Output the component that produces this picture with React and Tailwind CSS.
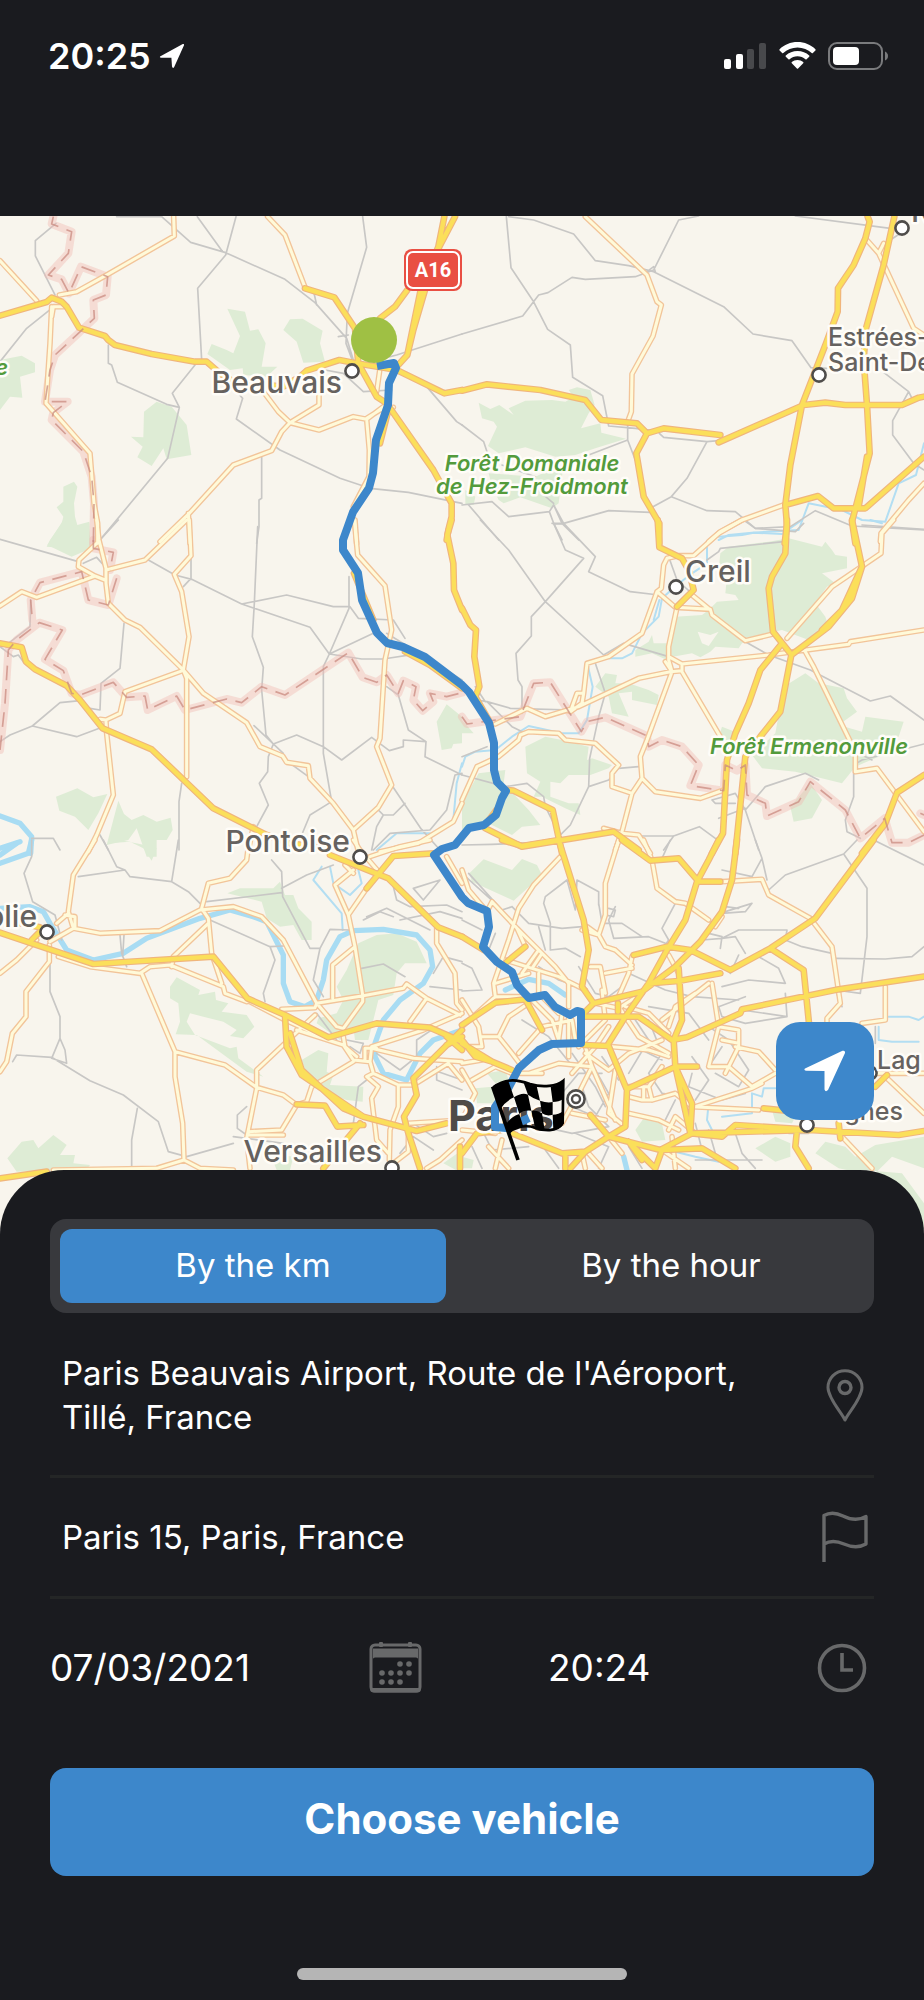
import { useState } from "react";

// The map is surveyed in six sheets, each drawn at three units per map pixel.
const SHEETS = [
  {
    at: "translate(0 210) scale(0.33333)",
    forest:
      "M682 296L735 305L750 362L775 358L797 400L785 470L832 470L800 500L730 495L728 475L690 480L655 455L622 432L635 402L680 420L700 430L720 378Z M870 328L908 326L968 362L960 400L975 455L910 458L890 395L850 360Z M432 605L470 575L515 590L560 645L574 735L500 748L490 715L455 768L412 742L428 710L393 680L430 682Z M150 990L185 940L190 920L170 892L190 875L190 830L222 815L232 830L222 880L225 920L232 945L268 935L272 1020L140 1010Z M0 450L65 437L105 460L105 487L60 500L67 563L30 560L0 600Z",
    minor:
      "M168 40L106 92L106 138L165 255 M0 455L80 355L155 295 M485 20L572 97L677 128L855 208L945 278L1040 385L1060 450 M592 20L668 125 M708 20L677 135L593 235L605 450 M1088 20L1100 112L1042 310L1038 400L1055 445 M940 240L950 285 M1015 380L1045 375 M325 405L325 460L335 465L352 517L500 583L538 592L503 745L300 990 M585 465L517 550L538 592 M1150 445L1190 435L1386 372 M710 545L728 565L709 627L840 720L1020 805L1110 835L1225 847L1386 880 M785 740L785 865L777 870L777 950L770 1000 M1280 530L1370 635L1386 645 M975 480L1030 490L1090 545L1175 540 M350 20L485 20",
    water: "",
    thin: "",
    secondary:
      "M0 152L110 272 M521 20L523 78L320 195L230 245L178 255 M155 290L150 400L138 580L270 730L282 880L293 940L293 1000 M190 290L160 290L155 320 M803 20L855 75L915 232 M790 545L835 605L870 638L957 660L1060 620L1100 628L1150 590 M957 550L957 585L870 638L845 665L815 722L700 765L568 910L480 995 M565 910L570 1000 M1100 628L1108 720L1107 800L1060 890 M1065 930L1070 1000 M1140 475L1130 545 M1100 625L1140 600L1180 592",
    primary:
      "M0 317L140 276L155 263L185 275L200 290L237 353L315 378L325 390L345 405L455 432L585 455L620 455L660 490L700 515L850 530L900 500L920 482L1018 450L1060 458L1160 475L1190 480L1333 550L1386 540 M915 235L1003 262L1065 355L1075 460L1130 560L1160 580L1300 780L1355 880L1355 920L1345 960L1340 990 M1333 20L1315 110L1262 240L1222 435L1190 470 M1365 20L1318 110L1275 240L1240 360L1222 435 M1140 325L1185 290L1222 240 M1165 600L1140 700",
    border:
      "M160 20L155 42L215 65L205 130L145 195L185 208L207 250L243 170L323 200L318 255L280 270L283 325L235 370L165 435L150 480L135 575L203 575L160 608L155 630L250 725L275 800L282 880L280 1000",
  },
  {
    at: "translate(462 210) scale(0.33333)",
    forest:
      "M50 578L85 597L112 585L155 615L140 595L190 572L270 570L310 575L335 562L320 540L345 532L385 540L398 585L380 610L357 655L415 640L418 668L492 686L400 715L340 735L280 740L190 712L110 730L78 708L105 650L95 635L60 625Z M80 790L220 800L305 760L290 880L270 895L175 862L125 880L110 870L90 830Z M10 840L40 860L35 885L10 885Z",
    minor:
      "M133 20L147 173L213 272L257 358L325 405L332 502L422 557L440 648L520 655L600 665 M0 372L182 318L230 255L258 248L330 202L370 208L520 200L575 180L650 30L710 18 M140 20L215 30L335 72L400 152L500 167L575 185L785 290L873 372L990 392L1047 473L1095 475 M1000 18L1285 55 M1330 60L1285 90L1250 120 M497 640L497 690L380 735 M497 690L520 750 M592 670L605 682L735 695L770 692 M735 695L675 805L628 860L573 890 M628 860L735 902L820 905L880 955L985 950L1060 902L1170 948L1386 960 M0 645L65 695L80 740 M0 885L90 875L140 920L262 905L275 885L305 940L440 902L565 907 M262 905L275 940L300 990 M275 885L300 940L350 990 M20 885L110 990 M275 942L305 942 M1265 487L1340 545L1292 632L1292 675L1355 760L1386 780 M1340 545L1350 565 M120 765L220 800L215 830L275 880 M555 185L575 170L580 185",
    water: "",
    thin: "M1386 700L1362 795L1310 820L1270 935L1200 930L1140 900L1040 880L1010 960L870 968L800 975L770 990",
    secondary:
      "M370 20L555 195L585 275L598 285L573 378L510 492L508 605L497 635 M1210 85L1250 130L1355 355L1386 375 M1265 100L1250 130 M965 885L840 930L775 965L740 995 M1386 820L1340 870L1257 970L1255 995",
    primary:
      "M0 542L75 523L235 540L370 570L418 630L525 640L555 670L605 655L775 675 M555 670L523 730L545 860L592 940L592 1000 M770 697L1025 585L1090 578L1150 585L1320 585L1370 563L1386 560 M1217 20L1223 35L1210 85L1175 165L1128 235L1127 305L1092 400L1020 585L985 765L970 885L975 945L968 1000 M1297 20L1265 165L1212 355L1205 450L1215 585L1223 730L1170 935L1180 1000 M1215 740L1190 890 M970 885L1068 858L1115 895L1210 895L1386 740",
    border: "",
  },
  {
    at: "translate(0 520) scale(0.33333)",
    forest:
      "M142 75L190 0L225 22L268 10L262 90L215 110Z M168 830L232 805L280 832L322 822L295 880L265 930L225 890L178 872Z M355 842L372 882L395 900L430 885L470 905L512 893L518 930L500 960L470 960L470 1010L440 1010L410 925L385 960L320 975Z M1340 553L1386 590L1386 670L1360 672L1355 685L1325 690L1310 605Z",
    minor:
      "M0 58L235 125 M355 0L295 65 M250 130L290 112L315 140 M445 120L525 165L575 178L725 252L930 322L988 402L1085 417L1150 417L1260 400 M725 252L860 225L1000 260L1050 260L1075 295L1180 300L1215 355 M773 20L763 250L757 350L790 442L785 510L798 645L820 672L890 645L970 680L1025 720L1115 652L1168 692L1210 680L1210 660L1278 665L1275 710L1386 765 M573 115L573 175L550 200 M372 310L360 445L303 490L300 570L270 565 M1047 170L1047 265L988 402L970 440L970 700L995 845L930 885L905 945 M988 402L1120 340 M1160 500L1195 525L1225 630L1278 665 M762 617L850 700 M820 672L805 710L803 755L778 790L805 855L770 920 M0 665L30 645L97 618L230 650L310 620 M97 618L180 548L240 542 M545 790L537 845L537 990 M1175 795L1262 925 M1215 850L1180 885L1150 885L1130 865 M1150 885L1130 920L1115 990 M850 715L925 770 M95 955L160 955L180 990 M300 945L325 990 M25 370L90 320L92 240 M0 380L40 410L55 405L70 425 M1386 760L1365 765L1340 870L1290 930L1170 940L1120 990 M1160 340L1386 480 M1262 925L1320 990",
    water: "M0 888L60 910L95 950L92 1000 M0 985L60 965",
    thin: "M1386 730L1370 790L1360 900 M1130 990L1190 940L1290 940",
    secondary:
      "M290 0L297 60L318 145L318 190L325 250L375 300L420 322L548 448L610 520L740 608L780 680L848 708L860 727L925 737L930 775L1000 850L1060 930L1075 995 M0 258L65 215L110 232L285 168L315 180 M290 70L237 120L235 140L285 168 M318 150L435 120L560 0 M568 0L573 107L523 163L545 215L567 350L550 450L560 475L560 770 M548 452L375 515L360 580L318 600L300 598 M318 605L320 640L340 825L290 945L265 995 M1063 0L1073 105L1155 197L1175 330L1155 420L1140 655L1130 680L1175 795L1135 862L1060 930 M1386 850L1360 905L1255 970L1140 995 M760 920L745 990",
    primary:
      "M0 370L65 382L78 425L105 448L200 497L240 540L308 625L455 688L640 865L800 945L870 970L980 985 M1355 0L1342 45L1360 130L1362 210L1386 270 M1062 160L1120 300 M1215 395L1290 435L1386 505",
    border:
      "M280 60L280 85L340 97L330 150 M350 175L325 255L265 240L245 155L120 188L92 240L97 300 M0 690L15 550L25 390L50 360L118 308L187 330L135 418L190 452L215 520L240 525L340 487L380 532L435 528L443 570L530 528L555 570L680 537L725 548L785 500L855 525L1045 398L1088 472L1130 487L1160 465L1195 520L1210 482L1248 500L1240 540L1268 572L1300 545L1290 520L1340 530L1386 518",
  },
  {
    at: "translate(462 520) scale(0.33333)",
    forest:
      "M775 100L800 80L920 65L980 55L1080 80L1090 65L1110 90L1120 105L1155 110L1155 145L1080 160L1120 190L1095 200L1060 250L1090 290L1100 320L1040 360L960 330L890 345L840 370L830 385L760 380L745 395L715 412L690 400L625 412L620 380L640 290L720 285L740 270L765 245L830 240L820 225L790 220L795 170L770 150Z M707 335L745 345L770 335L740 378L720 370Z M520 390L560 365L570 345L575 370L620 370L615 420L570 400L520 410Z M1030 460L1070 490L1145 505L1155 535L1185 575L1130 615L1200 635L1210 590L1325 605L1310 650L1240 670L1250 710L1180 740L1140 790L1000 755L900 745L870 705L940 640L965 500Z M430 460L465 465L460 490L500 490L560 510L590 525L585 555L510 540L510 515L470 520L500 590L450 580L440 530L400 500Z M190 680L250 650L300 660L380 680L375 720L390 715L450 735L440 745L385 765L320 765L295 790L265 785L265 830L320 850L350 850L355 885L310 865L240 830L215 830L235 785L195 760Z M50 760L130 750L125 790L200 870L235 915L180 920L150 945L90 915L60 910L0 930L0 850Z M1045 790L1080 840L1050 895L995 905L985 860Z M0 600L35 640L0 640Z M780 620L830 640L800 680L770 650Z",
    minor:
      "M55 0L140 90L250 245L425 405L485 370L620 410 M270 10L305 10L400 110L380 155L505 215L590 225 M250 245L365 115L310 90L275 10 M250 245L208 290L208 348L162 400L168 480L180 500L180 580 M845 0L880 25L1000 35L1025 10 M1200 15L1386 28 M965 65L775 85L770 95L735 120 M850 365L920 405L1045 450L1225 543L1285 528L1386 600 M400 430L430 520L410 590L383 715L380 800L325 915L290 950 M45 540L75 545L145 565L330 570 M75 545L150 620L190 640 M380 800L440 780L470 745L530 740 M0 710L75 680 M0 765L130 800L195 790L245 830L250 860L290 940 M1386 672L1200 720L1175 735L1175 830L1150 900L1155 935L1195 955 M1200 705L1230 720 M850 870L910 800L1030 760L1070 780 M750 840L820 820L850 870L890 990 M750 840L760 850L820 850 M850 865L770 895 M535 948L635 948L712 920L760 955 M635 948L605 990 M0 975L90 973L290 965 M620 110L645 180L700 230 M40 500L70 545",
    water: "",
    thin: "M735 80L735 130L690 160L645 195L600 235L590 290L540 340L510 400L480 415L440 415 M378 440L392 500L375 600L350 640L300 640L200 618L150 650L100 690L40 695L10 710L0 740 M592 240L575 300 M770 50L840 45L875 38L960 42L1020 0 M1225 0L1260 10",
    secondary:
      "M840 0L770 40L695 107L650 107L615 115L605 135L598 205L585 215L540 340L440 410L375 430L365 520L345 520L325 575L360 550L365 520 M585 215L640 262L745 268L750 285L850 362L930 343 M645 262L620 380L620 420L630 455L555 660L535 710L540 775L510 820L480 935L460 990 M620 410L660 432L920 405L1160 373L1165 365L1386 330 M610 425L630 455 M660 432L660 452L625 455L530 475L350 560L250 590L195 565L100 612 M660 455L775 650 M1295 0L1260 40L1257 100L1110 200L975 355 M690 225L745 270 M0 840L45 740L110 710L170 660L175 645L200 635L290 640L310 660L400 670L470 735L450 760L450 800L510 820 M540 775L580 815L715 835L785 810 M1030 395L1055 440L1165 665L1180 705L1180 755L1245 745L1386 935 M425 925L480 940L530 945L565 1000",
    primary:
      "M587 0L592 82L660 115L680 150L695 210L645 260 M975 0L970 100L930 170L920 205L933 335L985 400 M1170 0L1200 140L1170 235L1100 320L988 405L955 575L895 650L850 710L820 1000 M1200 140L1140 270L1080 330 M960 370L895 450L860 550L820 640L795 720L783 940L750 1000 M0 265L25 315L42 330L37 410L52 500L40 530L80 600 M130 810L155 812L272 870L300 1000 M70 925L180 980L455 935L530 990 M1386 765L1305 818L1270 910L1200 1000 M103 870L70 915",
    border:
      "M0 590L15 612L175 590L215 490L265 487L358 635L375 605L430 592L555 648L560 680L600 660L660 680L710 735L685 797L785 812L790 735L825 752L850 735L855 825L910 850L915 888L1010 845L1045 785L1150 870L1195 955L1268 895L1290 968L1340 968L1386 945 M1375 880L1386 885",
  },
  {
    at: "translate(0 840) scale(0.33333)",
    forest:
      "M682 160L720 145L820 145L840 125L855 165L880 165L895 205L935 245L935 300L905 300L880 255L840 260L800 235L785 185Z M1075 310L1130 285L1190 280L1250 305L1280 370L1215 370L1190 400L1180 465L1135 480L1105 600L1065 600L1060 560L1020 600L950 550L955 535L1010 520L1030 480L1010 440L1040 390Z M510 440L530 412L600 450L595 465L645 455L648 480L685 490L665 515L740 525L763 560L730 595L690 588L710 570L670 545L610 530L570 520L560 545L585 585L690 625L710 620L715 655L790 710L740 695L590 585L527 583L540 545L535 490L510 475Z M905 660L955 630L985 640L980 695L1000 705L990 735L1090 740L1088 785L1040 780L980 760L920 705Z M22 955L65 905L100 900L115 925L160 885L200 915L180 945L225 945L220 970L270 975L260 990L50 995Z M325 10L360 0L460 20L470 25L455 62L430 25L390 5Z M1330 970L1386 930L1386 1000Z M810 940L880 950L870 990L830 990Z",
    minor:
      "M95 0L95 50L72 100L98 185L165 225L185 300 M235 110L375 90L390 110L515 125L535 0 M515 125L565 155L600 190 M310 0L350 80L375 90 M620 185L845 158 M815 60L845 95L848 170L930 325L960 325L990 268L1050 270 M960 325L940 420L970 470 M845 145L920 105L1000 75 M630 240L810 320L825 360L790 460L795 485 M150 360L150 455L180 530L180 595L155 655L200 670L195 630L180 595 M38 665L50 645L155 652L270 722L370 765L475 845L505 935L560 950L700 910 M412 805L395 900L395 985 M360 285L365 340L380 380 M372 285L368 350 M1085 385L1150 372L1215 410 M810 320L850 318 M1240 145L1320 120L1270 180L1240 145 M1200 240L1320 215L1386 235 M1100 230L1160 205L1230 240L1290 270 M1090 240L1140 215L1180 230 M1180 140L1190 180L1230 200L1340 195L1386 215 M740 800L712 825L712 865L740 885 M950 520L1010 600 M1386 450L1290 440 M1386 365L1330 350L1300 400 M1060 850L1075 740L1100 720 M1130 640L1200 690L1250 650L1250 600L1310 560 M1386 720L1300 690 M1240 850L1300 890L1340 880 M1040 600L1090 610L1080 640L1050 620 M1200 940L1240 890L1300 930 M700 890L850 910 M1310 680L1310 720L1386 750",
    water:
      "M0 205L90 200L130 215L150 250L200 330L280 360L370 340L440 295L600 235L690 210L760 230L800 245L850 345L850 430L870 485L915 500L950 480L970 420L980 360L1020 290L1060 272L1150 268L1250 285L1290 330L1298 380L1270 430L1200 480L1150 540L1125 610L1125 650L1150 700L1220 720L1260 640L1300 600L1386 570 M95 0L85 40L0 70 M0 45L50 10",
    thin: "M1028 270L1025 220L940 120L965 80 M990 80L1000 130L1050 165L1085 130L1075 90",
    secondary:
      "M285 0L220 105L205 215L220 265L300 280L480 272L600 210L700 200L785 230L850 300L950 490L1010 560L1030 565 M745 20L740 60L690 115L625 130L605 205L625 235L635 340L665 430 M205 220L170 250 M220 265L150 305 M225 265L225 230L195 225 M0 400L50 360L110 300 M148 315L148 365L78 455L78 530L37 580L20 665L0 695 M175 350L270 380L420 400L450 380L510 375L670 440L675 460L740 485 M625 250L520 350L515 380 M425 400L525 635L525 710L548 850L552 960L470 985L160 990 M552 960L600 985L700 990 M525 635L675 675L770 742L850 765L890 795 M945 525L770 690L770 745L740 895L750 985 M845 508L945 503L950 490L1090 467L1210 445L1220 432L1280 475L1380 525 M890 570L1030 615L1060 660L1110 665L1115 620 M1060 90L1005 135L1045 225L1065 320L998 375L998 475 M1035 75L1060 100 M1100 145L1045 225 M1065 320L1088 465L1088 485L1030 565 M1115 620L1270 570L1386 520 M1115 625L1240 655L1386 665 M1030 590L1035 620L1070 650 M1095 660L1095 625L1130 625 M1110 665L1120 700L1195 735L1240 735L1345 670 M1195 735L1195 800L1170 870L1168 960 M1120 700L1100 710L1135 740L1115 775L1130 900L1165 940 M935 740L1060 665 M935 740L920 785L890 795L845 870L745 875L745 885L850 885 M1310 265L1310 310L1365 400L1370 490L1386 510 M1280 475L1230 545 M1060 0L1080 30L1140 100 M1110 50L1200 20L1290 0 M1225 850L1225 935L1180 970 M1345 670L1386 720 M1225 850L1386 840 M1386 900L1320 960L1280 985 M1340 50L1386 130 M740 480L855 540L945 580",
    primary:
      "M0 278L280 372L640 350L742 475L855 525L985 592L1130 550L1290 563L1386 605 M95 300L120 275 M60 250L120 262 M855 525L860 620L905 705L1090 830L1220 865L1250 873L1340 850 M870 580L905 690L1030 805L1090 830 M890 793L975 797L1012 860L1090 855 M1080 850L1030 910L970 985 M990 45L1165 115L1315 262L1386 290 M1100 145L1180 48L1300 40 M1386 570L1240 715L1250 765L1212 830L1222 870L1260 985 M0 1015L140 995 M1380 985L1380 920 M1340 590L1386 630 M1340 615L1386 590",
    border: "",
  },
  {
    at: "translate(462 840) scale(0.33333)",
    forest:
      "M22 100L65 58L150 90L180 57L225 75L240 105L155 182L30 125Z M880 925L940 890L985 910L985 950L940 965Z M930 810L1000 830L990 850L940 845Z M1060 940L1090 905L1150 920L1180 950L1240 915L1386 890L1386 985L1290 950L1240 1000L1200 1000L1130 985Z M520 870L545 835L600 850L610 900L540 905Z M75 700L130 690L140 720L100 730Z M40 745L90 740L100 790L45 790Z M0 950L35 960L30 985L0 985Z M1200 990L1320 1000L1386 1090L1386 1170L1200 1010Z",
    minor:
      "M315 120L250 170L245 190L265 250L265 330L310 325L355 350 M315 120L340 210L345 120L410 155L410 195 M460 200L440 240L455 295L560 290L610 310 M440 205L460 210L455 230L430 225 M410 190L420 250L480 250L540 290 M625 0L600 55 M870 110L900 55L880 0 M900 55L915 120 M1215 145L1215 290L1195 460L1120 450L1140 500 M1215 145L1145 42L1185 0 M1145 42L970 105L920 150 M1235 0L1386 75 M1120 355L1270 357L1350 350L1386 320 M720 300L780 295L830 270L975 270L970 300L1020 320L1110 340 M740 280L780 290L775 325 M780 295L820 290L850 340 M790 215L870 190L850 215L780 220L790 200L830 205 M640 190L600 265L620 300L610 315 M830 345L805 400 M890 350L950 385L970 430L860 420L780 440 M970 460L975 530L850 550L780 530L770 500L850 470 M840 510L975 530 M500 400L610 450L690 470L830 480 M350 380L400 460L440 470L480 440 M0 370L30 385L60 450L0 453 M0 240L60 270 M0 100L100 190 M20 100L120 210L150 200 M100 280L80 330 M150 200L200 250L300 265L360 260 M230 260L250 330 M560 540L600 640L560 700L600 760L670 770 M420 650L470 720 M400 690L440 760L400 830L330 800 M360 740L380 800L440 860 M690 650L740 720L700 780 M700 850L720 930L790 960 M740 870L760 940 M820 880L840 940L880 985 M500 920L540 985 M250 930L290 985 M60 870L90 930L200 920 M30 920L60 985 M640 780L610 840 M230 380L290 420L350 440 M180 540L260 590L300 640L340 690 M520 620L600 660 M740 560L800 600L860 690L830 740L760 700 M780 620L740 680 M1040 880L980 880 M1240 560L1240 610 M330 640L400 740L430 800 M300 760L350 700L420 700 M340 880L440 920L410 985 M240 860L330 880L440 860 M560 500L680 520L740 600 M700 960L900 960 M520 540L560 600L500 700 M780 90L870 110 M690 700L680 740L780 780L850 760",
    water: "M130 450L200 418L260 430L310 465 M485 950L495 990",
    thin: "M640 935L700 950L770 965 M1280 530L1340 530L1370 540L1386 530 M1250 560L1250 600L1290 605L1370 605 M940 745L905 745L900 770L870 760L870 820L780 830 M740 790L735 840L750 870",
    secondary:
      "M295 50L215 135L170 205L140 300L95 430L100 470L0 560 M470 0L430 130L430 225L410 285L360 270 M375 260L410 285L430 320L460 330L510 375 M510 350L500 400L465 480 M385 380L415 380L430 460 M430 400L510 385 M0 90L20 150L75 215L90 185L165 265L205 305L280 380L320 430L320 500 M165 265L190 320 M545 0L570 60L585 145L640 185L670 190L740 240 M780 125L900 118L920 165L1045 235L1110 320L1135 490L1095 535L1095 545 M1270 440L1270 540L1200 550 M780 230L760 260 M620 345L650 400 M750 430L770 560L830 570L830 620L790 700 M770 560L740 680L800 680L870 740L940 700 M820 620L890 635L940 690 M600 540L740 430 M700 800L870 745L900 730 M780 600L830 610 M490 500L560 520L620 580 M470 500L530 590L620 640 M450 620L560 630L620 650 M400 490L470 505L540 460 M600 600L500 640L440 690L370 640 M0 480L50 560L60 620L0 620 M60 590L110 590L150 640L180 680 M110 590L140 530L200 490 M0 670L60 660 M0 690L40 760L0 840 M30 720L100 680L150 700 M130 360L210 385L290 410L370 450 M210 385L240 340 M180 400L230 330 M230 400L230 460L290 520 M100 470L200 470L270 540L290 600 M100 430L200 400 M240 560L330 540L340 600 M320 520L320 650 M300 520L290 600 M350 620L430 540L420 450 M240 560L170 640 M200 700L290 670L390 680L460 840 M390 680L350 760L300 850 M370 620L390 680 M330 700L400 620L440 560 M0 870L100 880 M80 920L140 985 M120 900L100 985 M360 940L370 985 M380 940L420 985 M440 890L480 940 M460 690L440 820L490 860 M500 740L560 740L570 780L540 780L500 770 M545 740L545 780 M600 680L560 740 M570 780L640 760L690 800L890 810 M500 820L590 840L650 870 M600 930L680 985 M630 890L640 985 M700 880L640 830L620 870 M1140 890L1230 985 M1240 700L1386 700 M1270 710L1386 820 M330 820L430 840 M240 700L160 700 M620 560L640 500L700 460",
    primary:
      "M120 0L180 18L290 0L365 240L380 330L360 440L395 490 M770 0L740 60L705 125L670 240L615 330L560 430L490 530L440 610 M480 0L565 62L650 55L710 125L775 125 M825 0L810 120L780 215L715 305L640 380L540 455L395 490L365 520 M1235 0L1060 235L925 325L805 390L685 330L615 320L515 345 M925 325L1025 390L1042 560 M560 430L650 423L775 400 M650 385L660 540L635 600L640 680L690 790L685 880 M640 680L685 880 M360 530L530 530L630 600L675 592L835 520L840 508L1130 448L1386 410 M365 615L440 618L495 750L490 860L440 890L370 935L300 940L150 880 M640 680L500 745 M640 680L705 680 M385 825L440 890L595 930L690 880L1040 870L1310 885L1386 873 M690 880L780 890L820 855L1030 868 M905 805L1000 815 M500 905L580 985 M500 905L540 960 M580 985L600 930L720 925L820 985 M310 985L310 940 M325 985L370 935 M0 555L100 488L190 478L240 570 M0 610L90 665L150 690 M0 600L40 650L90 665 M0 940L45 880L120 870 M0 290L65 330 M135 365L190 320 M1240 740L1275 705 M1005 870L1000 920L1040 985 M1130 850L1135 895 M468 490L468 515",
    border: "",
  },
];

function Layer({ name, ...style }) {
  return (
    <g strokeLinejoin="round" strokeLinecap="round" fill="none" {...style}>
      {SHEETS.map((sheet) => (
        <path key={sheet.at} d={sheet[name]} transform={sheet.at} />
      ))}
    </g>
  );
}

const TOWNS = [
  [352, 371],
  [902, 228],
  [819, 375],
  [676, 587],
  [360, 857],
  [47, 932],
  [392, 1168],
  [870, 1073],
  [807, 1125],
];

function RouteMap() {
  return (
    <svg
      className="absolute inset-0 h-full w-full"
      viewBox="0 216 924 1018"
      preserveAspectRatio="xMidYMid slice"
      role="img"
      aria-label="Route from Beauvais to Paris"
    >
      <rect x="-600" y="-400" width="2200" height="2400" fill="#f8f5ed" />
      <Layer name="forest" fill="#deecd5" fillRule="evenodd" />
      <Layer name="water" stroke="#a8dcf3" strokeWidth="16" />
      <Layer name="thin" stroke="#b3def2" strokeWidth="6" />
      <Layer name="minor" stroke="#c8c7c5" strokeWidth="5" />
      <Layer name="border" stroke="#f0b9b3" strokeOpacity="0.42" strokeWidth="24" />
      <Layer name="secondary" stroke="#f2c499" strokeWidth="17" />
      <Layer name="secondary" stroke="#fffad9" strokeWidth="9" />
      <Layer name="primary" stroke="#f0b57c" strokeWidth="20" />
      <Layer name="primary" stroke="#fbdf5a" strokeWidth="13" />
      <Layer
        name="border"
        stroke="#c98b80"
        strokeOpacity="0.75"
        strokeWidth="5"
        strokeDasharray="44 26"
        strokeLinecap="butt"
      />

      <g fill="#fff" stroke="#4f4d4b" strokeWidth="2.6">
        {TOWNS.map(([x, y]) => (
          <circle key={`${x}-${y}`} cx={x} cy={y} r="6.6" />
        ))}
        <circle cx="576" cy="1099" r="8.6" />
        <circle cx="576" cy="1099" r="4" strokeWidth="2.4" />
      </g>

      <g
        className="font-['Inter',sans-serif] font-medium"
        fill="#66625f"
        stroke="#fffdf8"
        strokeWidth="5"
        strokeLinejoin="round"
        paintOrder="stroke"
      >
        <g fontSize="30">
          <text x="342" y="393" textAnchor="end">Beauvais</text>
          <text x="350" y="852" textAnchor="end">Pontoise</text>
          <text x="685" y="582">Creil</text>
          <text x="37" y="927" textAnchor="end">olie</text>
          <text x="382" y="1162" textAnchor="end">Versailles</text>
          <text x="911" y="222">R</text>
        </g>
        <g fontSize="25">
          <text x="828" y="346">Estrées-</text>
          <text x="828" y="371">Saint-De</text>
          <text x="877" y="1069">Lag</text>
          <text x="903" y="1120" textAnchor="end">ignes</text>
        </g>
        <text x="448" y="1131" fontSize="43" className="font-bold" fill="#4f4b48">Paris</text>
        <g fontSize="22" className="font-semibold italic" fill="#539b3c">
          <text x="532" y="471" textAnchor="middle">Forêt Domaniale</text>
          <text x="532" y="494" textAnchor="middle">de Hez-Froidmont</text>
          <text x="809" y="754" textAnchor="middle">Forêt Ermenonville</text>
          <text x="8" y="375" textAnchor="end">e</text>
        </g>
      </g>

      <path
        d="M377 366L394 363L396 368L389 383L388 405L376 440L373 473L369 488L353 512L343 540L343 550L358 573L362 600L377 633L387 643L403 647L425 657L462 685L469 692L489 723L494 743L494 770L497 782L506 791L502 798L496 815L484 825L469 828L455 845L442 849L434 855L462 897L468 903L487 911L489 927L483 947L497 962L512 972L517 985L529 998L545 995L555 1007L570 1015L577 1011L581 1012L581 1043L552 1044L539 1050L519 1068L509 1087L495 1107L495 1127L506 1128L529 1118"
        fill="none"
        stroke="#3d87cb"
        strokeWidth="8"
        strokeLinejoin="round"
      />

      <rect x="404" y="249" width="58" height="42" rx="8" fill="#e94f43" />
      <rect x="407" y="252" width="52" height="36" rx="6" fill="none" stroke="#fff" strokeWidth="2" />
      <text x="433" y="277" textAnchor="middle" fontSize="20" fill="#fff" className="font-['Roboto',sans-serif] font-bold">
        A16
      </text>

      <circle cx="374" cy="340" r="23" fill="#9fc044" />

      {/* Finish flag: the pale squares are open so the map shows through */}
      <g transform="translate(460 1060) scale(0.33333)">
        <path d="M98 80L174 300" stroke="#000" strokeWidth="11" fill="none" />
        <path d="M100 82C140 50 180 62 210 72C250 84 290 78 310 62L308 190C290 218 250 212 225 203C190 192 160 205 146 218" fill="none" stroke="#000" strokeWidth="8" />
        <path d="M98 80Q125 62 146 66L162 112Q138 122 122 146ZM190 66Q212 76 230 78L240 122Q220 116 204 104ZM272 80Q292 76 311 62L311 116Q296 126 278 126ZM162 112Q186 96 204 104L214 152Q188 150 178 162ZM240 122Q262 130 278 126L278 164Q260 170 246 160ZM140 190Q154 170 178 162L190 200Q165 200 148 220ZM214 152Q232 150 246 160L254 210Q232 210 224 198ZM278 164Q296 164 311 152L308 196Q296 210 280 210Z" fill="#000" />
      </g>
    </svg>
  );
}

function StatusBar() {
  return (
    <header className="flex h-[216px] shrink-0 items-start justify-between pl-12 pr-9 pt-[34px]">
      <div className="flex items-center gap-2">
        <span className="text-[36px] leading-[44px] font-semibold">20:25</span>
        <svg width="26" height="26" viewBox="0 0 26 26" fill="#fff" aria-hidden="true">
          <path d="M1 13.6L23.8 1.1Q25.4 .6 25 2.3L15.2 24Q13.8 26 13 23.6L12.4 14.8L2 14.7Q.3 14.4 1 13.6Z" />
        </svg>
      </div>
      <div className="flex h-11 items-center gap-3">
        <svg width="43" height="28" viewBox="0 0 43 28" aria-hidden="true">
          <rect x="0" y="17" width="7" height="10" rx="2" fill="#fff" />
          <rect x="12" y="12" width="7" height="15" rx="2" fill="#fff" />
          <rect x="23" y="7" width="7" height="20" rx="2" fill="#48494c" />
          <rect x="35" y="1" width="7" height="26" rx="2" fill="#48494c" />
        </svg>
        <svg width="37" height="28" viewBox="0 0 37 28" fill="#fff" aria-hidden="true">
          <path d="M18.5 0C11.5 0 5.2 2.7 .6 7.2Q0 7.9 .6 8.5L3.1 11Q3.7 11.5 4.3 11C8 7.5 13 5.4 18.5 5.4S29 7.5 32.7 11Q33.3 11.5 33.9 11L36.4 8.5Q37 7.9 36.4 7.2C31.8 2.7 25.5 0 18.5 0Z" />
          <path d="M18.5 9C14 9 9.9 10.7 6.8 13.5Q6.2 14.1 6.8 14.7L9.4 17.3Q10 17.8 10.6 17.3C12.7 15.5 15.5 14.3 18.5 14.3S24.3 15.5 26.4 17.3Q27 17.8 27.6 17.3L30.2 14.7Q30.8 14.1 30.2 13.5C27.1 10.7 23 9 18.5 9Z" />
          <path d="M18.5 18C16.3 18 14.3 18.8 12.8 20.1Q12.2 20.7 12.8 21.3L17.9 26.5Q18.5 27.1 19.1 26.5L24.2 21.3Q24.8 20.7 24.2 20.1C22.7 18.8 20.7 18 18.5 18Z" />
        </svg>
        <svg width="60" height="28" viewBox="0 0 60 28" aria-hidden="true">
          <rect x="1" y="1" width="53" height="26" rx="8" fill="none" stroke="#7a7b7d" strokeWidth="2" />
          <rect x="5" y="5" width="26" height="18" rx="4" fill="#fff" />
          <path d="M57 9.5Q60 11 60 14T57 18.5Z" fill="#7a7b7d" />
        </svg>
      </div>
    </header>
  );
}

function PinIcon() {
  return (
    <svg width="38" height="53" viewBox="0 0 38 53" fill="none" stroke="#68696a" strokeWidth="3" strokeLinejoin="round" aria-hidden="true">
      <path d="M19 51C15 43 2 29 2 18.5A17 16.8 0 0 1 36 18.5C36 29 23 43 19 51Z" />
      <circle cx="19" cy="18.5" r="6" strokeWidth="3.4" />
    </svg>
  );
}

function FlagIcon() {
  return (
    <svg width="46" height="52" viewBox="0 0 46 52" fill="none" stroke="#68696a" strokeWidth="3.4" strokeLinejoin="round" aria-hidden="true">
      <path d="M2 51V4.5C8 1 14 1.5 21 5C29 9 37 9.5 44 5.500V33C37 37 30 36.5 22 33C15 30 8 29.5 2 33" />
    </svg>
  );
}

const CALENDAR_DOTS = [
  [31, 23],
  [40, 23],
  [13, 32],
  [22, 32],
  [31, 32],
  [40, 32],
  [13, 41],
  [22, 41],
  [31, 41],
];

function CalendarIcon() {
  return (
    <svg width="53" height="53" viewBox="0 0 53 53" aria-hidden="true">
      <rect x="2" y="4" width="49" height="46" rx="4" fill="none" stroke="#68696a" strokeWidth="3" />
      <path d="M4 7.500H49V18Q49 16.5 47 16.5H6Q4 16.5 4 18Z" fill="#68696a" />
      <path d="M1 47H52V48Q52 51.5 48 51.5H5Q1 51.5 1 48Z" fill="#68696a" />
      <rect x="10" y="1" width="4" height="5" rx="1" fill="#68696a" />
      <rect x="39" y="1" width="4" height="5" rx="1" fill="#68696a" />
      {CALENDAR_DOTS.map(([x, y]) => (
        <circle key={`${x}-${y}`} cx={x} cy={y} r="2.8" fill="#68696a" />
      ))}
    </svg>
  );
}

function ClockIcon() {
  return (
    <svg width="50" height="50" viewBox="0 0 50 50" fill="none" stroke="#68696a" strokeWidth="3.6" aria-hidden="true">
      <circle cx="25" cy="25" r="22.500" />
      <path d="M25 10V27H36" />
    </svg>
  );
}

const MODES = ["By the km", "By the hour"];

export default function App() {
  const [mode, setMode] = useState(MODES[0]);

  return (
    <div className="flex min-h-screen flex-col bg-[#1a1b1f] font-['Inter',sans-serif] text-white">
      <StatusBar />

      <main className="flex flex-1 flex-col">
        <section className="relative min-h-[600px] flex-1 overflow-hidden">
          <RouteMap />
          <button
            type="button"
            aria-label="Centre on my location"
            className="absolute right-[50px] bottom-[114px] flex h-[98px] w-[98px] items-center justify-center rounded-3xl bg-[#3d87cb]"
          >
            <svg width="42" height="42" viewBox="0 0 42 42" fill="#fff" aria-hidden="true">
              <path d="M1 18.5L38.5 .8Q41.5 0 41 3L24 40Q21.5 42.5 20.5 39.5V21L2 20.8Q-.6 20 1 18.5Z" />
            </svg>
          </button>
        </section>

        <form
          className="relative -mt-16 rounded-t-[64px] bg-[#1a1b1f] px-[50px] pt-[49px] pb-5"
          onSubmit={(event) => event.preventDefault()}
        >
          <div className="flex h-[94px] gap-8 rounded-2xl bg-[#38393d] p-[10px]">
            {MODES.map((name) => (
              <button
                key={name}
                type="button"
                aria-pressed={mode === name}
                onClick={() => setMode(name)}
                className={
                  mode === name
                    ? "flex-1 rounded-xl bg-[#3d87cb] text-[33px]"
                    : "flex-1 rounded-xl text-[33px]"
                }
              >
                {name}
              </button>
            ))}
          </div>

          <div className="flex items-center border-b-3 border-[#242626] pt-[38px] pr-[10px] pb-9 pl-3">
            <textarea
              id="pickup"
              rows={2}
              defaultValue="Paris Beauvais Airport, Route de l'Aéroport, Tillé, France"
              className="mr-12 block min-w-0 flex-1 resize-none overflow-hidden bg-transparent text-[33px] leading-[44px] outline-none"
            />
            <label htmlFor="pickup" aria-label="Pick-up address">
              <PinIcon />
            </label>
          </div>

          <div className="flex h-[121px] items-center border-b-3 border-[#242626] pr-[6px] pl-3">
            <input
              id="destination"
              type="text"
              defaultValue="Paris 15, Paris, France"
              className="min-w-0 flex-1 bg-transparent text-[33px] leading-[44px] outline-none"
            />
            <label htmlFor="destination" aria-label="Destination">
              <FlagIcon />
            </label>
          </div>

          <div className="grid h-[137px] grid-cols-2 items-center">
            <div className="flex items-center justify-between pr-10">
              <input
                id="date"
                type="text"
                defaultValue="07/03/2021"
                className="w-[260px] min-w-0 bg-transparent text-[37px] leading-[44px] outline-none"
              />
              <label htmlFor="date" aria-label="Date">
                <CalendarIcon />
              </label>
            </div>
            <div className="flex items-center justify-between pr-[7px] pl-[86px]">
              <input
                id="time"
                type="text"
                defaultValue="20:24"
                className="w-[160px] min-w-0 bg-transparent text-[37px] leading-[44px] outline-none"
              />
              <label htmlFor="time" aria-label="Time">
                <ClockIcon />
              </label>
            </div>
          </div>

          <button
            type="submit"
            className="mt-8 flex h-[108px] w-full items-center justify-center rounded-2xl bg-[#3d87cb] pb-2 text-[42px] font-bold"
          >
            Choose vehicle
          </button>

          <div className="mx-auto mt-[92px] h-3 w-2/5 rounded-full bg-[#b5b5b5]" />
        </form>
      </main>
    </div>
  );
}
